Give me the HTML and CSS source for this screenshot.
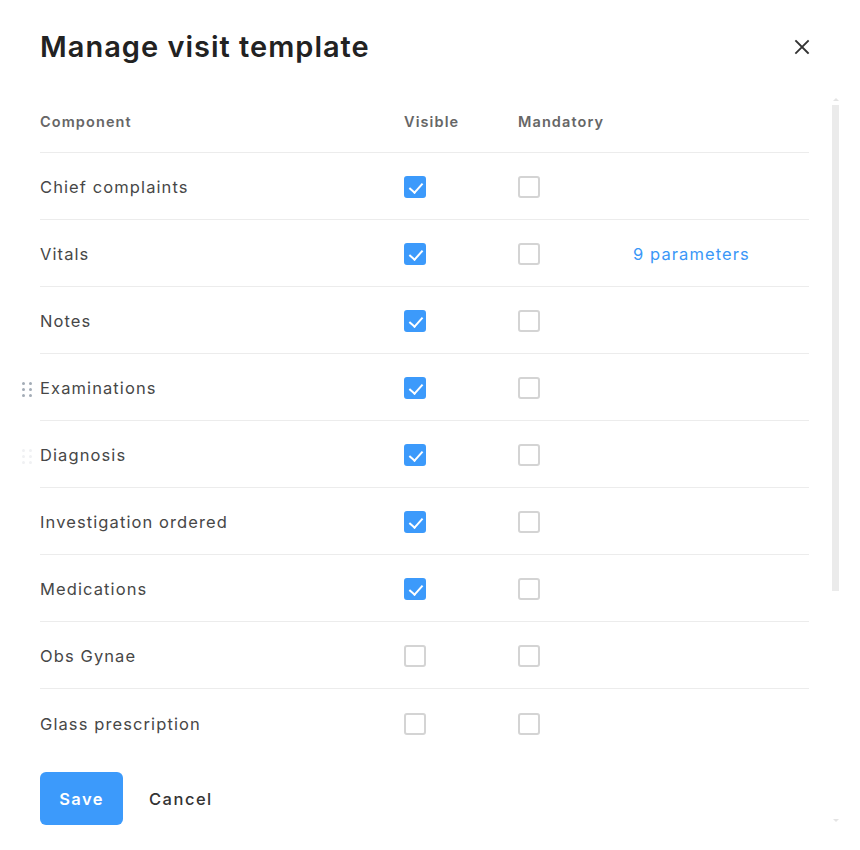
FILE: index.html
```html
<!DOCTYPE html>
<html lang="en">
<head>
<meta charset="utf-8">
<title>Manage visit template</title>
<link rel="stylesheet" href="styles.css">
</head>
<body>
<div class="dialog">
  <header class="dialog-head">
    <h1 class="dialog-title">Manage visit template</h1>
    <button class="close-btn" aria-label="Close">
      <svg width="16" height="16" viewBox="0 0 16 16"><path d="M2 2 L14 14 M14 2 L2 14" stroke="#333" stroke-width="1.8" stroke-linecap="square" fill="none"/></svg>
    </button>
  </header>

  <div class="dialog-body">
    <div class="body-main">
      <div class="tpl-table">
        <div class="tpl-row tpl-head">
          <div class="col-name">Component</div>
          <div class="col-check">Visible</div>
          <div class="col-check">Mandatory</div>
          <div class="col-extra"></div>
        </div>

        <div class="tpl-row">
          <div class="col-name">Chief complaints</div>
          <div class="col-check"><span class="cb checked"></span></div>
          <div class="col-check"><span class="cb"></span></div>
          <div class="col-extra"></div>
        </div>
        <div class="tpl-row">
          <div class="col-name">Vitals</div>
          <div class="col-check"><span class="cb checked"></span></div>
          <div class="col-check"><span class="cb"></span></div>
          <div class="col-extra"><a class="link">9 parameters</a></div>
        </div>
        <div class="tpl-row">
          <div class="col-name">Notes</div>
          <div class="col-check"><span class="cb checked"></span></div>
          <div class="col-check"><span class="cb"></span></div>
          <div class="col-extra"></div>
        </div>
        <div class="tpl-row">
          <span class="drag-handle"><i></i><i></i><i></i><i></i><i></i><i></i></span>
          <div class="col-name">Examinations</div>
          <div class="col-check"><span class="cb checked"></span></div>
          <div class="col-check"><span class="cb"></span></div>
          <div class="col-extra"></div>
        </div>
        <div class="tpl-row">
          <span class="drag-handle faint"><i></i><i></i><i></i><i></i><i></i><i></i></span>
          <div class="col-name">Diagnosis</div>
          <div class="col-check"><span class="cb checked"></span></div>
          <div class="col-check"><span class="cb"></span></div>
          <div class="col-extra"></div>
        </div>
        <div class="tpl-row">
          <div class="col-name">Investigation ordered</div>
          <div class="col-check"><span class="cb checked"></span></div>
          <div class="col-check"><span class="cb"></span></div>
          <div class="col-extra"></div>
        </div>
        <div class="tpl-row">
          <div class="col-name">Medications</div>
          <div class="col-check"><span class="cb checked"></span></div>
          <div class="col-check"><span class="cb"></span></div>
          <div class="col-extra"></div>
        </div>
        <div class="tpl-row">
          <div class="col-name">Obs Gynae</div>
          <div class="col-check"><span class="cb"></span></div>
          <div class="col-check"><span class="cb"></span></div>
          <div class="col-extra"></div>
        </div>
        <div class="tpl-row last">
          <div class="col-name">Glass prescription</div>
          <div class="col-check"><span class="cb"></span></div>
          <div class="col-check"><span class="cb"></span></div>
          <div class="col-extra"></div>
        </div>
      </div>

      <div class="actions">
        <button class="btn-primary">Save</button>
        <button class="btn-text">Cancel</button>
      </div>
    </div>

    <div class="scrollbar">
      <span class="sb-arrow up"></span>
      <span class="sb-thumb"></span>
      <span class="sb-rest"></span>
      <span class="sb-arrow down"></span>
    </div>
  </div>
</div>
</body>
</html>
```

FILE: styles.css
```css
* { box-sizing: border-box; }

html, body {
  margin: 0;
  background: #fff;
}

body {
  font-family: Inter, "Open Sans", sans-serif;
  color: #474747;
}

.dialog {
  width: 860px;
  height: 850px;
  padding-left: 40px;
  overflow: hidden;
}

.dialog-head {
  display: flex;
  align-items: center;
  justify-content: space-between;
  height: 40px;
  margin-top: 27px;
  padding-right: 50px;
}

.dialog-title {
  margin: 0;
  font-size: 29px;
  font-weight: 600;
  letter-spacing: 1px;
  color: #222;
  line-height: 40px;
}

.close-btn {
  border: 0;
  background: none;
  padding: 0;
  width: 16px;
  height: 16px;
  display: flex;
  cursor: pointer;
}

.dialog-body {
  display: flex;
  margin-top: 31px;
}

.body-main {
  width: 769px;
}

/* one template component per row: name, two toggles, optional extra */
.tpl-row {
  position: relative;
  display: flex;
  align-items: center;
  height: 67px;
  padding-top: 2px;
  border-bottom: 1px solid #ececec;
  font-size: 16.5px;
  letter-spacing: 1.1px;
}

.tpl-row.last { border-bottom: 0; }

.tpl-head {
  height: 55px;
  padding-top: 0;
  padding-bottom: 7px;
  font-size: 14.5px;
  font-weight: 600;
  color: #666;
  letter-spacing: 1.1px;
}

.col-name { width: 364px; }
.col-check { width: 114px; display: flex; }
.col-extra { flex: 1; padding-left: 1px; }

.cb {
  width: 22px;
  height: 22px;
  border: 2px solid #d4d4d4;
  border-radius: 3px;
  display: block;
  position: relative;
}

.cb.checked {
  background: #3c9afb;
  border-color: #3c9afb;
}

.cb.checked::after {
  content: "";
  position: absolute;
  left: 6px;
  top: 2px;
  width: 6px;
  height: 11px;
  border: solid #fff;
  border-width: 0 2px 2px 0;
  transform: rotate(42deg);
}

.link {
  color: #3a97f7;
  text-decoration: none;
}

/* six-dot grip shown to the left of a draggable row */
.drag-handle {
  position: absolute;
  left: -18px;
  top: 28px;
  display: grid;
  grid-template-columns: 3px 3px;
  column-gap: 4px;
  row-gap: 3px;
}

.drag-handle i {
  width: 3px;
  height: 3px;
  border-radius: 50%;
  background: #a3acb6;
}

.drag-handle.faint i { background: #f0f1f3; }

.actions {
  display: flex;
  align-items: center;
  margin-top: 16px;
  gap: 9px;
}

.btn-primary {
  width: 83px;
  height: 53px;
  border: 0;
  border-radius: 6px;
  background: #3c9afb;
  color: #fff;
  font-family: inherit;
  font-size: 16.5px;
  font-weight: 600;
  letter-spacing: 1.4px;
}

.btn-text {
  border: 0;
  background: none;
  padding: 0 17px;
  height: 53px;
  font-family: inherit;
  font-size: 16.5px;
  font-weight: 500;
  color: #333;
  letter-spacing: 1.5px;
}

/* slim scroll track beside the list */
.scrollbar {
  margin-left: 23px;
  width: 7px;
  display: flex;
  flex-direction: column;
  align-items: center;
  height: 724px;
}

.sb-arrow {
  width: 0;
  height: 0;
  border-left: 3px solid transparent;
  border-right: 3px solid transparent;
}

.sb-arrow.up { border-bottom: 3px solid #e4e4e4; margin-bottom: 4px; }
.sb-arrow.down { border-top: 3px solid #e4e4e4; margin-top: 4px; }

.sb-thumb {
  width: 7px;
  height: 486px;
  background: #ebebeb;
}

.sb-rest { flex: 1; }
```
